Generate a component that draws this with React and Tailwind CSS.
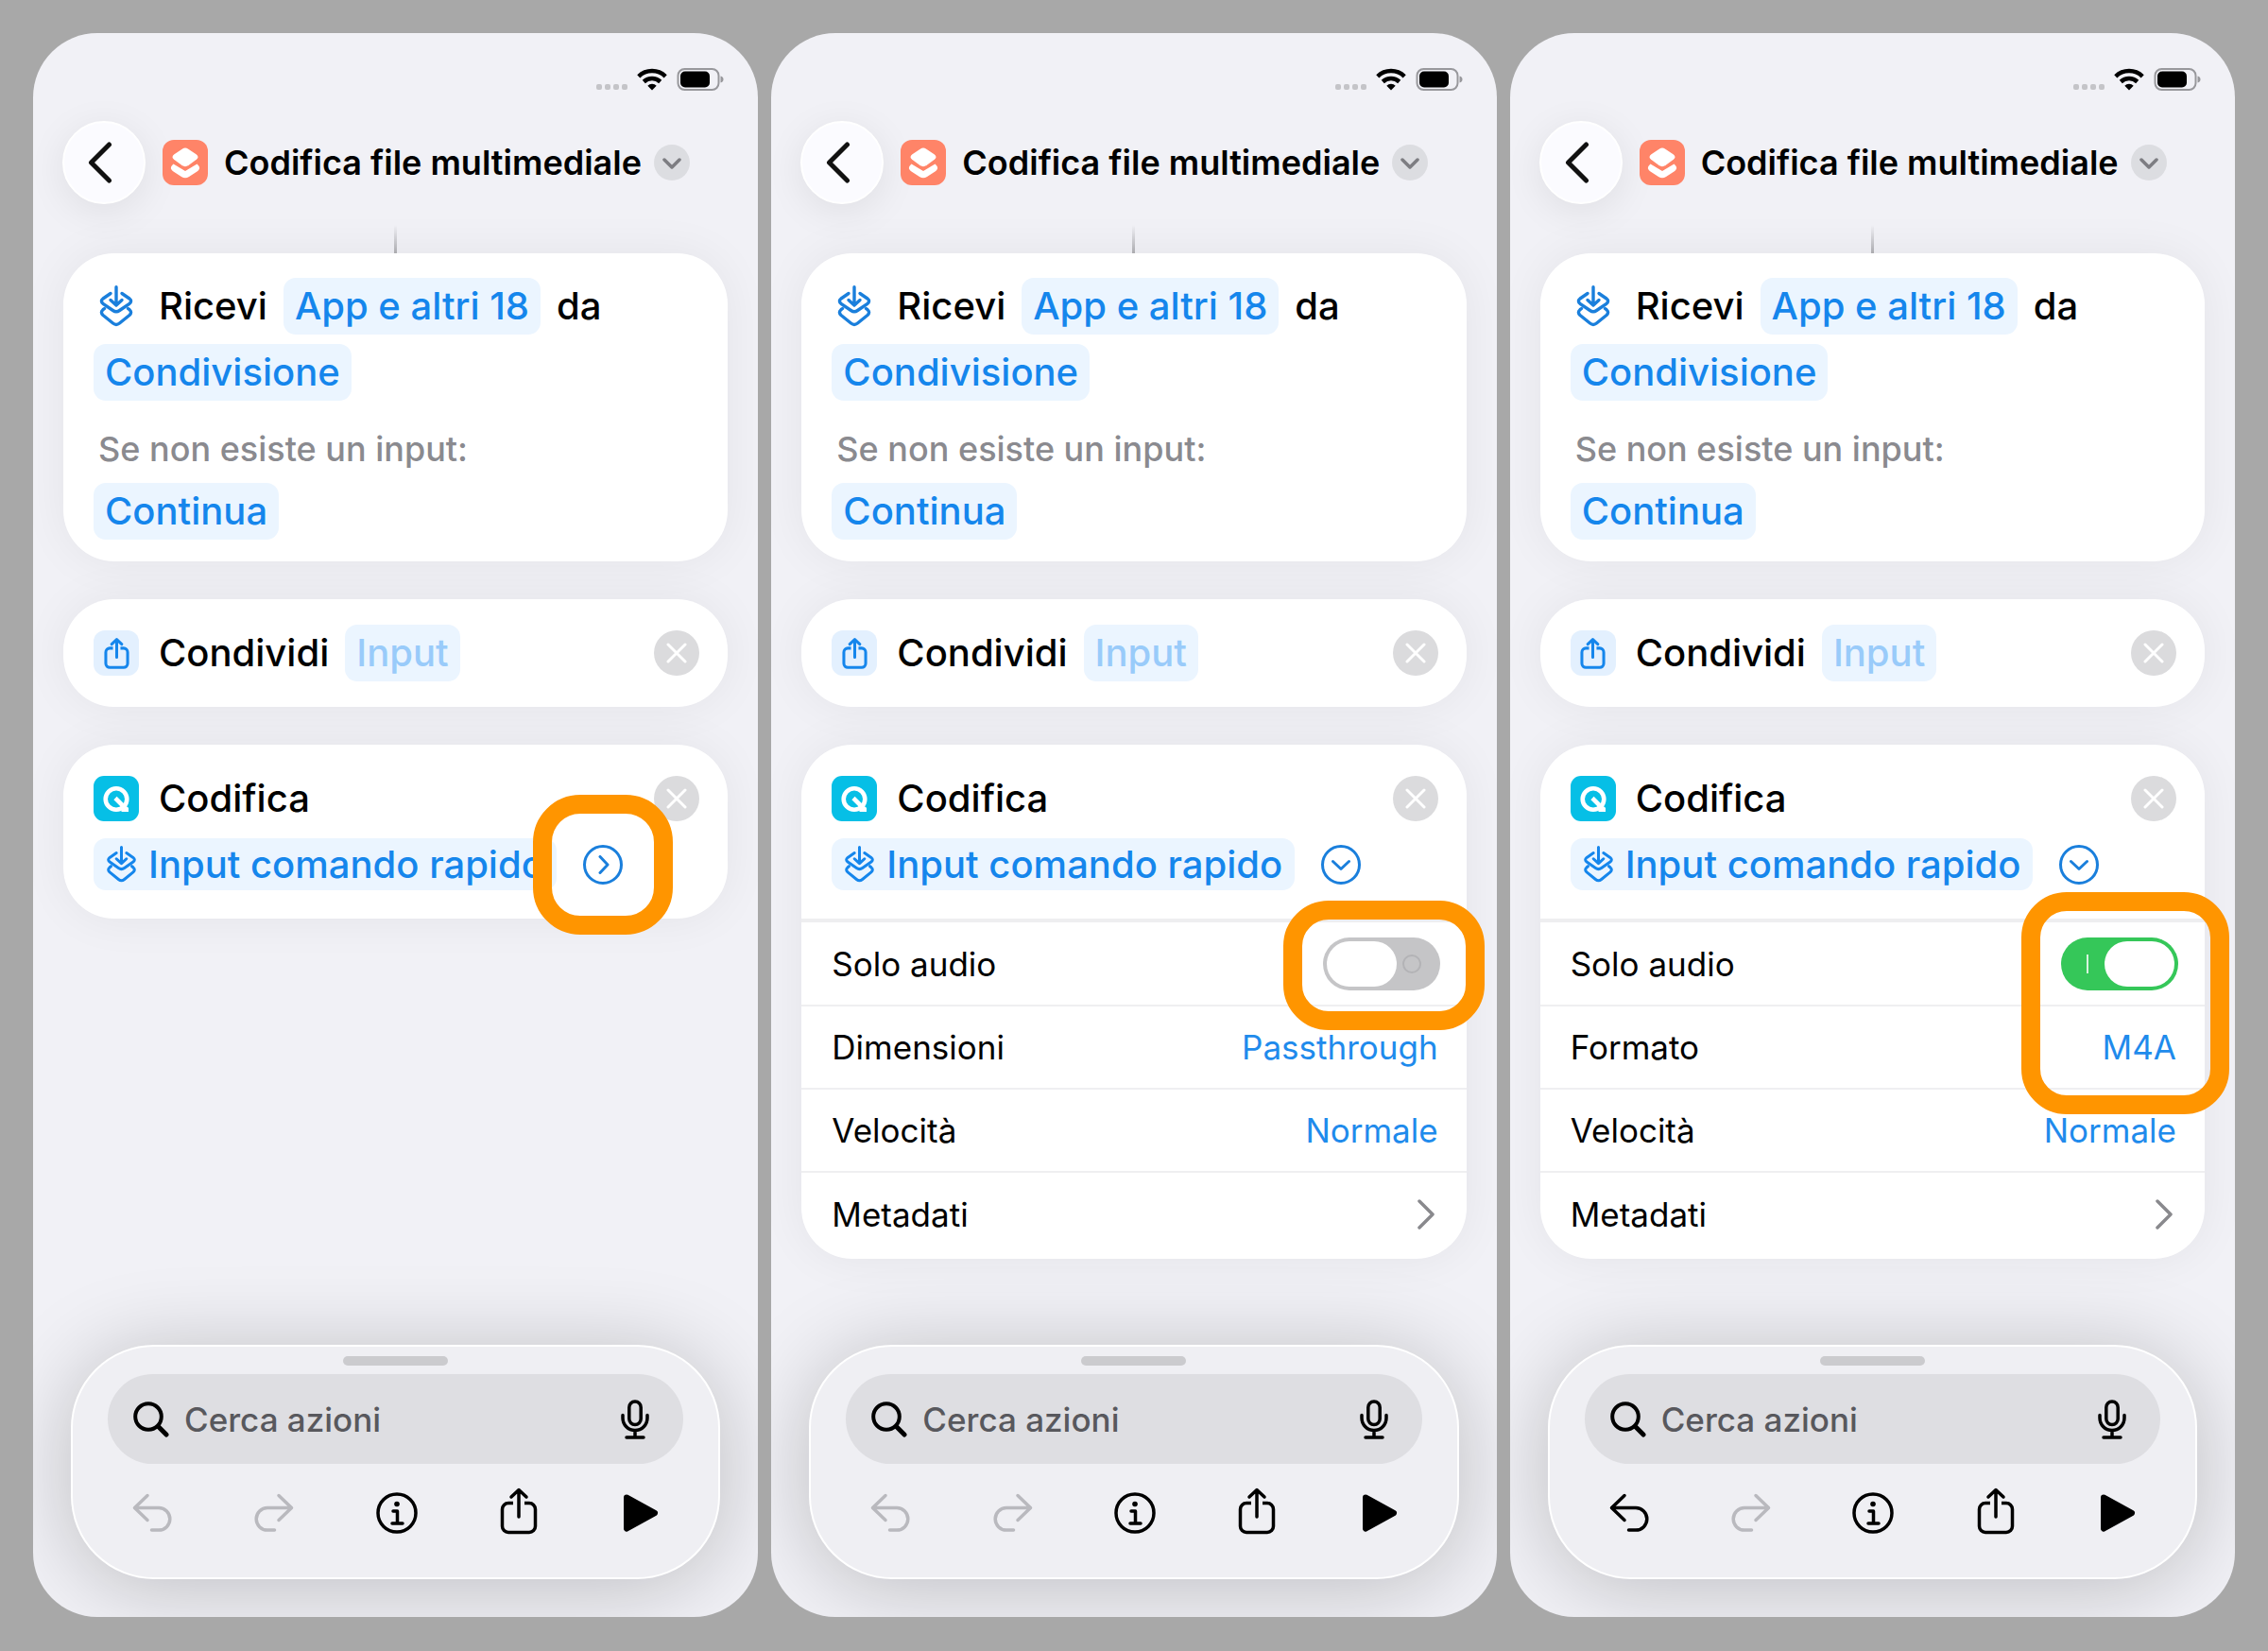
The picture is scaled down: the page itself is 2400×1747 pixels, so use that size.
import React, { useState } from "react";

const screens = [
  { id: "closed", expanded: false, audioOnly: false, canUndo: false, highlight: "arrow" },
  { id: "open", expanded: true, audioOnly: false, canUndo: false, highlight: "switch" },
  { id: "audio", expanded: true, audioOnly: true, canUndo: true, highlight: "format" },
];

function InputIcon({ className }) {
  return (
    <svg viewBox="0 0 36 44" fill="none" stroke="currentColor" strokeWidth="3.4" strokeLinecap="round" strokeLinejoin="round" className={className}>
      <path d="M18 1.7V20M12 15.5l6 5.5 6-5.5" />
      <path d="M12 8.5 4 14Q.8 16.5 4 19.3L14.5 26.5Q18 29 21.5 26.5L32 19.3Q35.2 16.5 32 14L24 8.5" />
      <path d="M5.5 24.5 4 25.7Q.8 28.5 4 31.5L14.5 40Q18 42.8 21.5 40L32 31.5Q35.2 28.5 32 25.7L30.5 24.5" />
    </svg>
  );
}

function ShareIcon({ className, strokeWidth }) {
  return (
    <svg viewBox="0 0 40 50" fill="none" stroke="currentColor" strokeWidth={strokeWidth} strokeLinecap="round" strokeLinejoin="round" className={className}>
      <path d="M20 2.5V31M12 10l8-7.5 8 7.5" />
      <path d="M14 16.5H9A6.5 6.5 0 0 0 2.5 23v18A6.5 6.5 0 0 0 9 47.5h22a6.5 6.5 0 0 0 6.5-6.5V23a6.5 6.5 0 0 0-6.5-6.5h-5" strokeLinecap="butt" />
    </svg>
  );
}

function UndoIcon({ className }) {
  return (
    <svg viewBox="0 0 42 42" fill="none" stroke="currentColor" strokeWidth="3.5" strokeLinecap="round" strokeLinejoin="round" className={className}>
      <path d="M16 2.5 2.5 15.5 16 28.5" />
      <path d="M3 15.5h25a11.8 11.8 0 0 1 0 23.6h-7.5" />
    </svg>
  );
}

function StatusBar() {
  return (
    <div className="flex h-[26px] items-center justify-end gap-[10px] pr-[36px]">
      <div className="flex items-end gap-[3px] self-end pb-[2px]">
        {[0, 1, 2, 3].map((dot) => (
          <span key={dot} className="size-[6px] rounded-[2px] bg-[#c4c4c8]" />
        ))}
      </div>
      <svg viewBox="0 0 32 24" className="h-[24px] w-[32px]">
        <path d="M1.8 8.8a20.5 20.5 0 0 1 28.4 0" fill="none" stroke="#000" strokeWidth="4.5" />
        <path d="M7.3 14.5a12.6 12.6 0 0 1 17.4 0" fill="none" stroke="#000" strokeWidth="4.5" />
        <path d="M11.3 18.7a6.8 6.8 0 0 1 9.4 0L16 23.5z" />
      </svg>
      <svg viewBox="0 0 50 26" className="h-[26px] w-[50px]">
        <rect x="1.5" y="2" width="43" height="22" rx="7" fill="none" stroke="#98989c" strokeWidth="2" />
        <rect x="4" y="4.5" width="31" height="17" rx="5" />
        <path d="M46.5 9.5q3 .8 3 3.5t-3 3.5z" fill="#98989c" />
      </svg>
    </div>
  );
}

function Header() {
  return (
    <header className="flex items-center pl-[31px] pr-[60px] pt-[31px]">
      <button aria-label="Indietro" className="flex size-[88px] shrink-0 items-center justify-center rounded-full border-2 border-white bg-[#fbfbff] shadow-[0_8px_40px_rgba(0,0,0,0.08)]">
        <svg viewBox="0 0 26 44" fill="none" stroke="#111" strokeWidth="5" strokeLinecap="round" strokeLinejoin="round" className="mr-[8px] h-[44px] w-[26px]">
          <path d="M22.5 3 3.5 22l19 19" />
        </svg>
      </button>
      <svg viewBox="0 0 48 48" className="ml-[18px] size-[48px] shrink-0">
        <rect width="48" height="48" rx="12" fill="#ff8468" />
        <path d="M11.5 25.5Q7.5 29 9.5 31.5 10 32.5 11.5 33.5L20 39Q24 41.5 28 39L36.5 33.5Q38 32.5 38.5 31.5 40.5 29 36.5 25.5L24 33z" fill="#fff" />
        <path d="M20.5 8.6Q24 6.4 27.5 8.6L36.5 14.8Q40.5 18.2 36.5 21.5L28 27.8Q24 30.5 20 27.8L11.5 21.5Q7.5 18.2 11.5 14.8z" fill="#fff" stroke="#ff8468" strokeWidth="2" />
      </svg>
      <h1 className="ml-[17px] whitespace-nowrap text-[36px] font-semibold leading-[44px]">Codifica file multimediale</h1>
      <button aria-label="Opzioni" className="ml-[13px] flex size-[38px] shrink-0 items-center justify-center rounded-full bg-[#dcdde1]">
        <svg viewBox="0 0 20 12" fill="none" stroke="#7d7d82" strokeWidth="3.5" strokeLinecap="round" strokeLinejoin="round" className="mt-[2px] h-[12px] w-[20px]">
          <path d="m2 2 8 8 8-8" />
        </svg>
      </button>
    </header>
  );
}

function Pill({ children, className = "" }) {
  return (
    <button className={`rounded-[13px] bg-[#ebf5ff] px-[12px] text-[40px] font-medium leading-[60px] text-[#1586ec] whitespace-nowrap ${className}`}>
      {children}
    </button>
  );
}

function RemoveButton() {
  return (
    <button aria-label="Rimuovi" className="ml-auto flex size-[48px] shrink-0 items-center justify-center rounded-full bg-[#dbdbdd]">
      <svg viewBox="0 0 22 22" fill="none" stroke="#fff" strokeWidth="3" strokeLinecap="round" className="size-[22px]">
        <path d="m2 2 18 18M20 2 2 20" />
      </svg>
    </button>
  );
}

function ReceiveCard() {
  return (
    <section className="rounded-[54px] bg-white px-[32px] pb-[23px] pt-[26px] shadow-[0_0_50px_rgba(0,0,0,0.06)]">
      <div className="flex items-center text-[40px] font-medium leading-[60px]">
        <InputIcon className="ml-[6px] h-[44px] w-[36px] text-[#1a7fdc]" />
        <span className="ml-[27px]">Ricevi</span>
        <Pill className="ml-[17px]">App e altri 18</Pill>
        <span className="ml-[17px]">da</span>
      </div>
      <Pill className="mt-[10px]">Condivisione</Pill>
      <p className="ml-[5px] mt-[28px] text-[36px] font-medium leading-[46px] text-[#8a8a8f]">Se non esiste un input:</p>
      <Pill className="mt-[13px]">Continua</Pill>
    </section>
  );
}

function ShareCard() {
  return (
    <section className="flex items-center rounded-[54px] bg-white py-[27px] pl-[32px] pr-[30px] text-[40px] font-medium shadow-[0_0_50px_rgba(0,0,0,0.06)]">
      <span className="flex size-[48px] items-center justify-center rounded-[12px] bg-[#e3f0fe] text-[#1586ec]">
        <ShareIcon className="h-[33px] w-[27px]" strokeWidth="4.6" />
      </span>
      <span className="ml-[21px] leading-[60px]">Condividi</span>
      <Pill className="ml-[17px]">
        <span className="text-[#99cbfa]">Input</span>
      </Pill>
      <RemoveButton />
    </section>
  );
}

function Switch({ id, defaultChecked }) {
  const [on, setOn] = useState(defaultChecked);
  return (
    <span className="relative flex">
      <input
        type="checkbox"
        role="switch"
        id={id}
        checked={on}
        onChange={(event) => setOn(event.target.checked)}
        className="h-[56px] w-[124px] appearance-none rounded-full bg-[#c5c5c7] p-[4px] before:block before:h-[48px] before:w-[74px] before:rounded-full before:bg-white checked:bg-[#35c759] checked:before:ml-[42px]"
      />
      {on ? (
        <span className="pointer-events-none absolute left-[27px] top-[18px] h-[20px] w-[2px] bg-white/80" />
      ) : (
        <span className="pointer-events-none absolute right-[20px] top-[18px] size-[20px] rounded-full border-2 border-[#b3b3b6]" />
      )}
    </span>
  );
}

function SelectRow({ id, label, options }) {
  return (
    <div className="flex h-[88px] items-center justify-between border-b-2 border-[#efeff1] pl-[32px] pr-[30px]">
      <label htmlFor={id}>{label}</label>
      <select id={id} className="appearance-none bg-transparent text-right text-[#1f8bec] [text-align-last:right]">
        {options.map((option) => (
          <option key={option}>{option}</option>
        ))}
      </select>
    </div>
  );
}

function EncodeCard({ screen }) {
  const [expanded, setExpanded] = useState(screen.expanded);
  return (
    <section className="rounded-[54px] bg-white shadow-[0_0_50px_rgba(0,0,0,0.06)]">
      <div className="pb-[30px] pl-[32px] pr-[30px] pt-[32px]">
        <div className="flex items-center">
          <svg viewBox="0 0 48 48" fill="none" stroke="#fff" className="size-[48px]">
            <rect width="48" height="48" rx="11" fill="#06bfe6" stroke="none" />
            <circle cx="24" cy="24.5" r="11.3" strokeWidth="4.6" />
            <path d="m23 23.5 12 12M29.5 35.8h7.5" strokeWidth="4.6" />
          </svg>
          <span className="ml-[21px] text-[40px] font-medium leading-[50px]">Codifica</span>
          <RemoveButton />
        </div>
        <div className="mt-[17px] flex items-center">
          <button className="flex items-center whitespace-nowrap rounded-[13px] bg-[#ebf5ff] px-[13px] text-[40px] font-medium leading-[55px] text-[#1586ec]">
            <InputIcon className="mr-[12px] h-[39px] w-[33px]" />
            Input comando rapido
          </button>
          <button
            aria-label="Mostra opzioni"
            aria-expanded={expanded}
            onClick={() => setExpanded(!expanded)}
            className="relative ml-[28px] flex size-[42px] shrink-0 items-center justify-center rounded-full border-[3px] border-[#1a7fdc] text-[#1a7fdc]"
          >
            <svg viewBox="0 0 20 20" fill="none" stroke="currentColor" strokeWidth="3" strokeLinecap="round" strokeLinejoin="round" className="size-[20px]">
              <path d={expanded ? "m1.5 6.5 8.5 8 8.5-8" : "m7 1.5 8 8.5-8 8.5"} />
            </svg>
            {screen.highlight === "arrow" && (
              <span className="pointer-events-none absolute -inset-[56px] z-10 rounded-[50px] border-[20px] border-[#ff9500]" />
            )}
          </button>
        </div>
      </div>
      {expanded && (
        <div className="relative border-t-4 border-[#eeeef0] pb-[3px] text-[35px] leading-[46px]">
          <div className="flex h-[89px] items-center justify-between border-b-2 border-[#efeff1] pl-[32px] pr-[28px]">
            <label htmlFor={`audio-${screen.id}`}>Solo audio</label>
            <Switch id={`audio-${screen.id}`} defaultChecked={screen.audioOnly} />
          </div>
          {screen.audioOnly ? (
            <SelectRow id={`format-${screen.id}`} label="Formato" options={["M4A"]} />
          ) : (
            <SelectRow id={`size-${screen.id}`} label="Dimensioni" options={["Passthrough"]} />
          )}
          <SelectRow id={`speed-${screen.id}`} label="Velocità" options={["Normale"]} />
          <button className="flex h-[88px] w-full items-center justify-between pl-[32px] pr-[34px]">
            Metadati
            <svg viewBox="0 0 18 32" fill="none" stroke="#89898d" strokeWidth="3.5" strokeLinecap="round" strokeLinejoin="round" className="h-[32px] w-[18px]">
              <path d="M2 2l14 14L2 30" />
            </svg>
          </button>
          {screen.highlight === "switch" && (
            <span className="pointer-events-none absolute -right-[19px] -top-[23px] h-[137px] w-[213px] rounded-[48px] border-[20px] border-[#ff9500]" />
          )}
          {screen.highlight === "format" && (
            <span className="pointer-events-none absolute -right-[26px] -top-[32px] h-[235px] w-[220px] rounded-[48px] border-[20px] border-[#ff9500]" />
          )}
        </div>
      )}
    </section>
  );
}

function BottomSheet({ id, canUndo }) {
  return (
    <footer className="mx-[40px] mb-[40px] mt-auto rounded-[88px] border-2 border-white bg-[#efeff3] px-[37px] pb-[43px] pt-[10px] shadow-[0_8px_90px_rgba(0,0,0,0.22)]">
      <div className="mx-auto h-[10px] w-[111px] rounded-full bg-[#cbcbce]" />
      <div className="mt-[9px] flex h-[95px] items-center rounded-full bg-[#dedee2] pl-[27px] pr-[36px]">
        <svg viewBox="0 0 38 38" fill="none" stroke="#000" strokeLinecap="round" className="size-[38px] shrink-0">
          <circle cx="16" cy="16" r="13.8" strokeWidth="4" />
          <path d="m26.5 26.5 8.5 8.5" strokeWidth="5" />
        </svg>
        <input
          id={`search-${id}`}
          type="text"
          aria-label="Cerca azioni"
          placeholder="Cerca azioni"
          className="ml-[16px] min-w-0 flex-1 bg-transparent text-[35px] font-medium leading-[46px] text-black outline-none placeholder:text-[#58585d]"
        />
        <button aria-label="Dettatura">
          <svg viewBox="0 0 30 42" fill="none" stroke="#000" strokeWidth="3.5" strokeLinecap="round" className="h-[42px] w-[30px]">
            <rect x="8.8" y="2" width="12.4" height="24.5" rx="6.2" />
            <path d="M2 16.5v3a13 13 0 0 0 26 0v-3M15 33v6.5M6 40h18" />
          </svg>
        </button>
      </div>
      <div className="mt-[27px] flex h-[50px] items-center justify-between pl-[25px] pr-[23px] *:flex *:w-[44px] *:justify-center">
        <button aria-label="Annulla" disabled={!canUndo} className="disabled:text-[#b9b9be]">
          <UndoIcon className="size-[42px]" />
        </button>
        <button aria-label="Ripeti" disabled className="disabled:text-[#b9b9be]">
          <UndoIcon className="size-[42px] -scale-x-100" />
        </button>
        <button aria-label="Informazioni">
          <svg viewBox="0 0 44 44" fill="none" stroke="#000" strokeWidth="3.5" className="size-[44px]">
            <circle cx="22" cy="22" r="20" />
            <circle cx="22" cy="12.5" r="2.8" fill="#000" stroke="none" />
            <path d="M18 20h4.5v12.5M17 33h11" strokeLinecap="round" strokeLinejoin="round" />
          </svg>
        </button>
        <button aria-label="Condividi" className="pb-[4px]">
          <ShareIcon className="h-[50px] w-[40px]" strokeWidth="3.5" />
        </button>
        <button aria-label="Esegui">
          <svg viewBox="0 0 38 42" className="h-[42px] w-[38px]">
            <path d="M4 4.5 34 21 4 37.5z" stroke="#000" strokeWidth="6" strokeLinejoin="round" />
          </svg>
        </button>
      </div>
    </footer>
  );
}

function Phone({ screen }) {
  return (
    <main className="flex min-w-0 flex-1 flex-col overflow-hidden rounded-[68px] bg-[#f1f1f6] pt-[36px]">
      <StatusBar />
      <Header />
      <div className="mx-auto mt-[22px] h-[30px] w-[3px] bg-linear-to-b from-transparent to-[#b0b0b4]" />
      <div className="mx-[32px] flex flex-col gap-[40px]">
        <ReceiveCard />
        <ShareCard />
        <EncodeCard screen={screen} />
      </div>
      <BottomSheet id={screen.id} canUndo={screen.canUndo} />
    </main>
  );
}

export default function App() {
  return (
    <div className="flex min-h-screen gap-[14px] bg-[#a8a8a8] px-[35px] pb-[36px] pt-[35px] font-['Inter','Liberation_Sans',sans-serif] text-black">
      {screens.map((screen) => (
        <Phone key={screen.id} screen={screen} />
      ))}
    </div>
  );
}
